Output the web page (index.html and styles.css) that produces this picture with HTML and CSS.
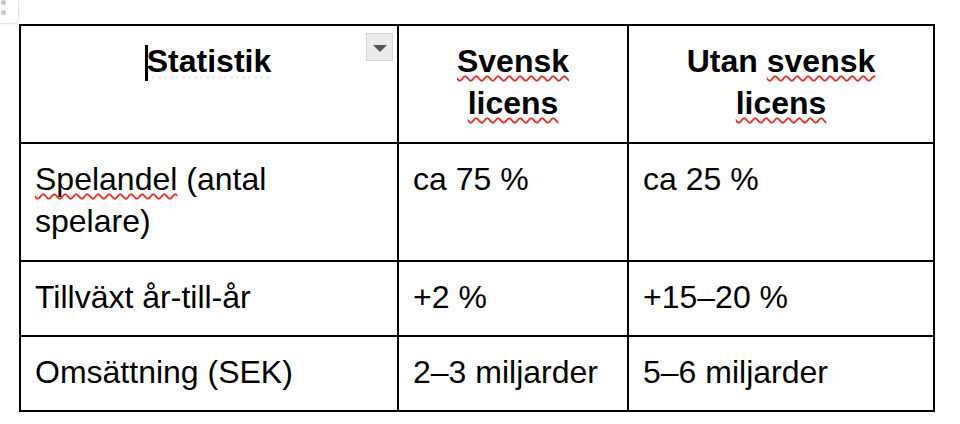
FILE: index.html
```html
<!DOCTYPE html>
<html lang="sv">
<head>
<meta charset="utf-8">
<title>Statistik</title>
<link rel="stylesheet" href="styles.css">
</head>
<body>
<div class="handle"><span class="dot"></span><span class="dot"></span></div>
<div class="doc">
  <div class="table-wrap">
    <table class="stats">
      <thead>
        <tr class="tall">
          <th class="c1"><span class="cursor-host">Statistik</span></th>
          <th class="c2"><span class="spell">Svensk</span> <span class="spell">licens</span></th>
          <th class="c3">Utan <span class="spell">svensk</span> <span class="spell">licens</span></th>
        </tr>
      </thead>
      <tbody>
        <tr class="tall">
          <td><span class="spell">Spelandel</span> (antal spelare)</td>
          <td>ca 75 %</td>
          <td>ca 25 %</td>
        </tr>
        <tr>
          <td>Tillväxt år-till-år</td>
          <td>+2 %</td>
          <td>+15–20 %</td>
        </tr>
        <tr>
          <td>Omsättning (SEK)</td>
          <td>2–3 miljarder</td>
          <td>5–6 miljarder</td>
        </tr>
      </tbody>
    </table>
    <div class="menu-btn"><span class="tri"></span></div>
  </div>
</div>
</body>
</html>
```
FILE: styles.css
```css
html, body {
  margin: 0;
  padding: 0;
  background: #ffffff;
}

body {
  font-family: "Liberation Sans", Arial, sans-serif;
  color: #000;
}

.handle {
  position: absolute;
  left: 0;
  top: 0;
  width: 18px;
  height: 23px;
  border-right: 1px solid #e4e4e4;
  border-bottom: 1px solid #e4e4e4;
  border-bottom-right-radius: 6px;
  box-shadow: 1px 1px 2px rgba(0, 0, 0, 0.04);
}

.handle .dot {
  position: absolute;
  left: 1px;
  width: 5px;
  height: 5px;
  border-radius: 50%;
  background: #c9c9c9;
}

.handle .dot:first-child { top: 0; }
.handle .dot:last-child { top: 10px; }

.doc {
  padding: 24px 0 0 19px;
}

.table-wrap {
  position: relative;
  width: 916px;
}

.stats {
  width: 916px;
  table-layout: fixed;
  border-collapse: separate;
  border-spacing: 0;
  border-top: 2px solid #000;
  border-left: 2px solid #000;
  font-size: 32px;
  line-height: 42px;
}

.stats th,
.stats td {
  box-sizing: border-box;
  border-right: 2px solid #000;
  border-bottom: 2px solid #000;
  padding: 14px 14px 17px 14px;
  vertical-align: top;
  text-align: left;
  font-weight: normal;
}

.stats tr.tall th,
.stats tr.tall td {
  padding-bottom: 18px;
}

.stats th {
  font-weight: bold;
  text-align: center;
}

.stats .c1 { width: 378px; }
.stats .c2 { width: 230px; }
.stats .c3 { width: 306px; }

.spell {
  text-decoration: underline wavy #e0362c;
  text-decoration-thickness: 1.5px;
  text-underline-offset: 3px;
  text-decoration-skip-ink: none;
}

.cursor-host {
  position: relative;
  text-decoration: underline dotted #f0f0f0;
  text-underline-offset: 4px;
}

.cursor-host::before {
  content: "";
  position: absolute;
  left: -2px;
  top: 2px;
  width: 3px;
  height: 36px;
  background: #000;
}

.menu-btn {
  position: absolute;
  left: 347px;
  top: 9px;
  width: 25px;
  height: 26px;
  background: #ebebeb;
  border: 1px solid #d4d4d4;
}

.menu-btn .tri {
  position: absolute;
  left: 5.5px;
  top: 11px;
  width: 0;
  height: 0;
  border-left: 7px solid transparent;
  border-right: 7px solid transparent;
  border-top: 7px solid #555;
}
```
